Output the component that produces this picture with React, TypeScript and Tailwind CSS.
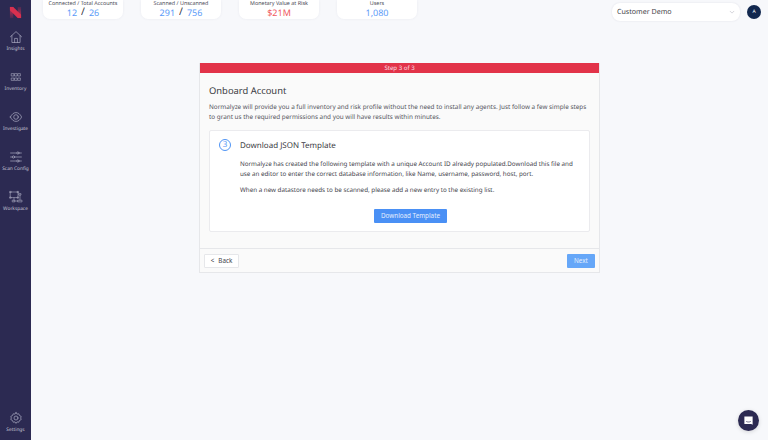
import React from "react";

function NavItem({ label, icon }: { label: string; icon: React.ReactNode }) {
  return (
    <div className="flex h-[40px] w-full flex-col items-center">
      <div className="h-[14px] w-[14px] text-[#a9a9c0]">{icon}</div>
      <div className="mt-[2px] text-[4.8px] leading-[7px] text-[#c4c4d4]">{label}</div>
    </div>
  );
}

const stroke = { fill: "none", stroke: "currentColor", strokeWidth: 1, strokeLinecap: "round", strokeLinejoin: "round" } as const;

const icons = {
  home: (
    <svg viewBox="0 0 14 14" className="h-full w-full" {...stroke} strokeWidth={0.7}>
      <path d="M1.4 6.8 7 1.6l5.6 5.2" />
      <path d="M2.9 5.6v6.9h8.2V5.6" />
      <path d="M5.6 12.5V8.4h2.8v4.1" />
    </svg>
  ),
  inventory: (
    <svg viewBox="0 0 14 14" className="h-full w-full" {...stroke} strokeWidth={0.6}>
      <rect x="2.6" y="3.6" width="2.3" height="2.4" />
      <rect x="5.85" y="3.6" width="2.3" height="2.4" />
      <rect x="9.1" y="3.6" width="2.3" height="2.4" />
      <rect x="2.6" y="8" width="2.3" height="2.4" />
      <rect x="5.85" y="8" width="2.3" height="2.4" />
      <rect x="9.1" y="8" width="2.3" height="2.4" />
    </svg>
  ),
  eye: (
    <svg viewBox="0 0 14 14" className="h-full w-full" {...stroke} strokeWidth={0.7}>
      <path d="M1.4 7C2.8 4 4.8 2.6 7 2.6S11.2 4 12.6 7c-1.4 3-3.4 4.4-5.6 4.4S2.8 10 1.4 7Z" />
      <circle cx="7" cy="7" r="2.3" />
    </svg>
  ),
  sliders: (
    <svg viewBox="0 0 14 14" className="h-full w-full" {...stroke} strokeWidth={0.7}>
      <path d="M1.6 3h6.2M10 3h2.4M1.6 7h1.8M5.6 7h6.8M1.6 11h6.2M10 11h2.4" />
      <circle cx="8.9" cy="3" r="1.1" />
      <circle cx="4.5" cy="7" r="1.1" />
      <circle cx="8.9" cy="11" r="1.1" />
    </svg>
  ),
  workspace: (
    <svg viewBox="0 0 14 14" className="h-full w-full" {...stroke} strokeWidth={0.6}>
      <rect x="1.6" y="2" width="7.4" height="5.6" />
      <rect x="1" y="1.4" width="1.2" height="1.2" />
      <rect x="8.4" y="1.4" width="1.2" height="1.2" />
      <rect x="1" y="7" width="1.2" height="1.2" />
      <rect x="8.4" y="7" width="1.2" height="1.2" />
      <path d="M11 5v5M5 7.6V11M6 11h3" />
      <rect x="10" y="3.6" width="2" height="1.5" />
      <rect x="3.6" y="10.2" width="2.2" height="1.7" />
      <rect x="9" y="10.2" width="4" height="1.7" />
    </svg>
  ),
  settings: (
    <svg viewBox="0 0 14 14" className="h-full w-full" {...stroke} strokeWidth={0.7}>
      <path d="M7 1.6 8 3.1l1.8-.3.7 1.7 1.7.9-.5 1.6.5 1.6-1.7.9-.7 1.7L8 10.9l-1 1.5-1-1.5-1.8.3-.7-1.7-1.7-.9.5-1.6-.5-1.6 1.7-.9.7-1.7L6 3.1 7 1.6Z" />
      <circle cx="7" cy="7" r="2" />
    </svg>
  ),
};

function Stat({ label, children }: { label: string; children: React.ReactNode }) {
  return (
    <div className="flex h-[19px] w-[80px] flex-col items-center rounded-b-[7px] bg-white shadow-[0_0_3px_rgba(40,40,80,0.06)]">
      <div className="whitespace-nowrap text-[5.4px] leading-[6px] text-[#4a4a55]">{label}</div>
      <div className="flex h-[13px] items-center whitespace-nowrap text-[9px] leading-[13px] text-[#5b9bf8]">{children}</div>
    </div>
  );
}

function Pair({ a, b }: { a: string; b: string }) {
  return (
    <>
      <span>{a}</span>
      <span className="mx-[4px] inline-block h-[13px] overflow-hidden text-[10.5px] leading-[13px] text-[#3a3a44]">/</span>
      <span>{b}</span>
    </>
  );
}

export default function App() {
  return (
    <div className="flex h-[440px] w-[768px] overflow-hidden bg-[#f7f8fb] font-['Noto_Sans','Open_Sans',sans-serif] antialiased [text-rendering:geometricPrecision]">
      <aside className="flex h-full w-[31px] shrink-0 flex-col items-center bg-[#2c2a52]">
        <svg viewBox="0 0 14 14" className="mt-[6px] h-[13px] w-[13px]">
          <defs>
            <linearGradient id="lg1" x1="0" y1="0" x2="0" y2="1">
              <stop offset="0" stopColor="#c92f50" />
              <stop offset="1" stopColor="#4a2b54" />
            </linearGradient>
            <linearGradient id="lg2" x1="0" y1="0" x2="0" y2="1">
              <stop offset="0" stopColor="#4a2b54" />
              <stop offset="1" stopColor="#c92f50" />
            </linearGradient>
          </defs>
          <path d="M1 1h3.6v12H1Z" fill="url(#lg1)" />
          <path d="M9.4 1H13v12H9.4Z" fill="url(#lg2)" />
          <path d="M1 1h3.6L13 9.4V13H9.4L1 4.6Z" fill="#d8304f" />
        </svg>
        <div className="mt-[11px] w-full">
          <NavItem label="Insights" icon={icons.home} />
          <NavItem label="Inventory" icon={icons.inventory} />
          <NavItem label="Investigate" icon={icons.eye} />
          <NavItem label="Scan Config" icon={icons.sliders} />
          <NavItem label="Workspace" icon={icons.workspace} />
        </div>
        <div className="mt-auto mb-[6px] w-full">
          <div className="flex w-full flex-col items-center">
            <div className="h-[14px] w-[14px] text-[#a9a9c0]">{icons.settings}</div>
            <div className="mt-[2px] text-[4.8px] leading-[7px] text-[#c4c4d4]">Settings</div>
          </div>
        </div>
      </aside>

      <main className="relative flex min-w-0 flex-1 flex-col">
        <header className="flex h-[63px] items-start pl-[12px] pr-[7px]">
          <div className="flex gap-[18px]">
            <Stat label="Connected / Total Accounts"><Pair a="12" b="26" /></Stat>
            <Stat label="Scanned / Unscanned"><Pair a="291" b="756" /></Stat>
            <Stat label="Monetary Value at Risk"><span className="text-[#f0595f]">$21M</span></Stat>
            <Stat label="Users">1,080</Stat>
          </div>
          <div className="ml-auto mt-[3px] flex items-center">
            <div className="flex h-[18px] w-[128px] items-center justify-between rounded-[8px] bg-white pl-[5px] pr-[5px] shadow-[0_0_2px_rgba(40,40,80,0.12)]">
              <span className="text-[7.1px] text-[#3f3f48]">Customer Demo</span>
              <svg viewBox="0 0 8 8" className="h-[6px] w-[6px] text-[#c8c8d0]" {...stroke}>
                <path d="m1.5 3 2.5 2.5L6.5 3" />
              </svg>
            </div>
            <div className="ml-[7px] flex h-[14px] w-[14px] items-center justify-center rounded-full bg-[#12284f] text-[5px] leading-none text-white">A</div>
          </div>
        </header>

        <div className="ml-[168px] flex h-[210px] w-[401px] flex-col border border-t-0 border-[#e6e7ea] bg-[#fafafa]">
          <div className="flex h-[10px] items-center justify-center bg-[#e23349] text-[6.1px] leading-[10px] text-[#f9dfe2]">Step 3 of 3</div>
          <div className="flex flex-1 flex-col px-[9px]">
            <h1 className="mt-[10px] text-[9.4px] font-normal leading-[15px] text-[#3c3c44]">Onboard Account</h1>
            <p className="mt-[4px] text-[6.35px] leading-[10px] text-[#54545c]">
              Normalyze will provide you a full inventory and risk profile without the need to install any agents. Just follow a few simple steps to grant us the required permissions and you will have results within minutes.
            </p>
            <section className="mt-[8px] flex h-[102px] rounded-[2px] border border-[#ebebee] bg-white pl-[9px] pr-[10px]">
              <div className="mt-[8px] flex h-[12px] w-[12px] shrink-0 items-center justify-center rounded-full border border-[#4f94f5] text-[8px] leading-none text-[#4f94f5]">3</div>
              <div className="ml-[9px] min-w-0 flex-1">
                <h2 className="mt-[8px] text-[8px] font-normal leading-[13px] text-[#3c3c44]">Download JSON Template</h2>
                <p className="mt-[7px] text-[6.25px] leading-[10px] text-[#44444c]">
                  Normalyze has created the following template with a unique Account ID already populated.Download this file and use an editor to enter the correct database information, like Name, username, password, host, port.
                </p>
                <p className="mt-[6px] text-[6.25px] leading-[10px] text-[#44444c]">When a new datastore needs to be scanned, please add a new entry to the existing list.</p>
                <div className="mt-[14px] flex pl-[134px]">
                  <button className="flex h-[14px] w-[73px] items-center justify-center rounded-[1px] bg-[#4a90f5] text-[6.3px] text-[#e4eefd]">Download Template</button>
                </div>
              </div>
            </section>
          </div>
          <div className="flex h-[24px] items-center justify-between border-t border-[#e6e7ea] pl-[4px] pr-[4px]">
            <button className="flex h-[14px] w-[35px] items-center justify-center rounded-[1px] border border-[#e6e7ea] bg-white text-[6.3px] text-[#44444c]">
              <span className="mr-[4px]">&lt;</span>Back
            </button>
            <button className="flex h-[14px] w-[28px] items-center justify-center rounded-[1px] bg-[#66a7f8] text-[6.3px] text-[#e4eefd]">Next</button>
          </div>
        </div>

        <div className="absolute bottom-[9px] right-[9px] flex h-[21px] w-[21px] items-center justify-center rounded-full bg-[#2c2a52] shadow-[0_1px_4px_rgba(0,0,0,0.15)]">
          <svg viewBox="0 0 12 12" className="h-[11px] w-[11px]">
            <path d="M1.5 1.5h9v9l-1.5-.8h-7.5Z" fill="#fff" />
            <path d="M3.5 7c1.4.8 3.6.8 5 0" fill="none" stroke="#2c2a52" strokeWidth="0.7" />
          </svg>
        </div>
      </main>
    </div>
  );
}
